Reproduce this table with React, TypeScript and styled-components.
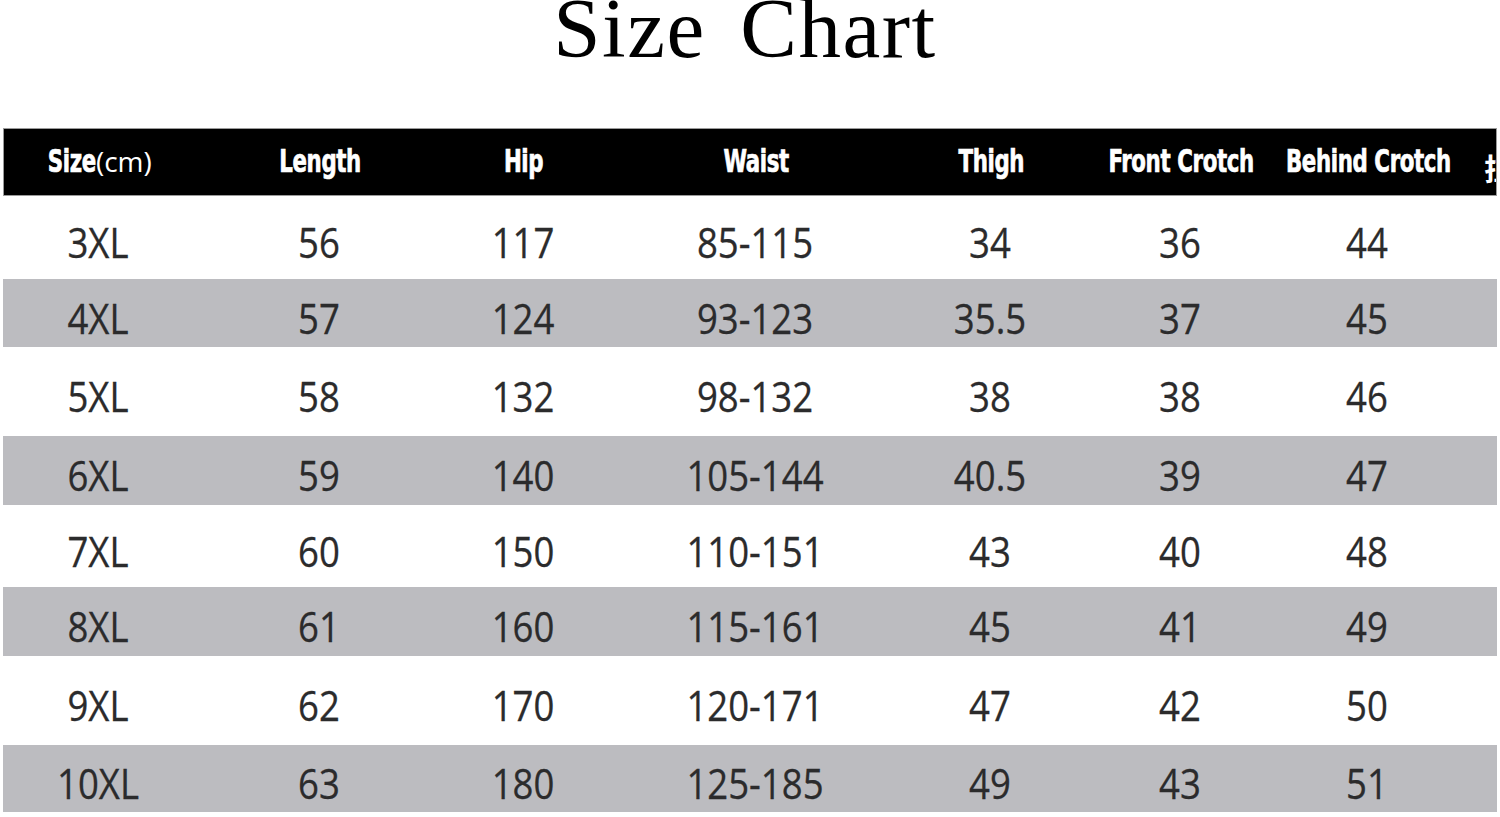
import * as React from 'react';
import styled, { createGlobalStyle } from 'styled-components';

const GlobalStyle = createGlobalStyle`
  html, body {
    margin: 0;
    padding: 0;
    background: #ffffff;
  }
  body {
    width: 1500px;
    height: 817px;
    overflow: hidden;
  }
`;

const COLS = '190px 252px 156px 308px 162px 218px 156px 52px';

const Page = styled.div`
  width: 1500px;
  height: 817px;
  display: flex;
  flex-direction: column;
  background: #ffffff;
`;

const Title = styled.h1`
  margin: 0;
  height: 128px;
  box-sizing: border-box;
  font-family: 'Liberation Serif', 'Times New Roman', serif;
  font-weight: 400;
  font-size: 85px;
  line-height: 57px;
  letter-spacing: 1.5px;
  word-spacing: 12px;
  color: #000;
  text-align: center;
  padding-right: 10px;
`;

const Table = styled.div`
  margin: 0 3px;
  display: flex;
  flex-direction: column;
`;

const HeadRow = styled.div`
  display: grid;
  grid-template-columns: ${COLS};
  height: 68px;
  background: #000;
  border: 1px solid #9a9a9a;
  box-sizing: border-box;
  align-items: center;
  overflow: hidden;
`;

const HeadCell = styled.div`
  display: flex;
  justify-content: center;
  align-items: center;
  white-space: nowrap;
  padding-bottom: 2px;
`;

const SizeCell = styled(HeadCell)`
  justify-content: flex-start;
  padding-left: 27px;
`;

const HeadText = styled.span<{ $origin?: string }>`
  display: inline-block;
  color: #fff;
  font-family: 'DejaVu Sans Condensed', 'DejaVu Sans', sans-serif;
  font-stretch: condensed;
  font-weight: 700;
  font-size: 32px;
  letter-spacing: -0.5px;
  -webkit-text-stroke: 0.7px #fff;
  transform: scaleX(0.74);
  transform-origin: ${(p) => p.$origin || 'center'};
`;

const Unit = styled.span`
  color: #fff;
  font-family: 'Open Sans', 'Liberation Sans', sans-serif;
  font-weight: 400;
  font-size: 28px;
`;

const Cut = styled.div`
  color: #fff;
  font-family: 'Noto Sans CJK SC', sans-serif;
  font-weight: 700;
  font-size: 30px;
  padding-left: 38px;
  padding-top: 10px;
  overflow: hidden;
  white-space: nowrap;
`;

const Row = styled.div<{ $h: number; $shade: boolean }>`
  display: grid;
  grid-template-columns: ${COLS};
  height: ${(p) => p.$h}px;
  box-sizing: border-box;
  padding-top: 8px;
  align-items: center;
  background: ${(p) => (p.$shade ? '#bcbcc0' : '#ffffff')};
`;

const Cell = styled.div`
  display: flex;
  justify-content: center;
  font-family: 'Open Sans', 'Noto Sans', sans-serif;
  font-size: 42px;
  color: #2b2b2c;
  white-space: nowrap;
  transform: scaleX(0.87);
  -webkit-text-stroke: 0.3px #2b2b2c;
`;

const headers = ['Length', 'Hip', 'Waist', 'Thigh', 'Front Crotch', 'Behind Crotch'];

const rows: { h: number; v: string[] }[] = [
  { h: 83, v: ['3XL', '56', '117', '85-115', '34', '36', '44'] },
  { h: 68, v: ['4XL', '57', '124', '93-123', '35.5', '37', '45'] },
  { h: 89, v: ['5XL', '58', '132', '98-132', '38', '38', '46'] },
  { h: 69, v: ['6XL', '59', '140', '105-144', '40.5', '39', '47'] },
  { h: 82, v: ['7XL', '60', '150', '110-151', '43', '40', '48'] },
  { h: 69, v: ['8XL', '61', '160', '115-161', '45', '41', '49'] },
  { h: 89, v: ['9XL', '62', '170', '120-171', '47', '42', '50'] },
  { h: 67, v: ['10XL', '63', '180', '125-185', '49', '43', '51'] },
];

export default function App() {
  return (
    <Page>
      <GlobalStyle />
      <Title>Size Chart</Title>
      <Table>
        <HeadRow>
          <SizeCell>
            <HeadText $origin="right center">Size</HeadText>
            <Unit>(cm)</Unit>
          </SizeCell>
          {headers.map((h) => (
            <HeadCell key={h}>
              <HeadText>{h}</HeadText>
            </HeadCell>
          ))}
          <Cut>拉</Cut>
        </HeadRow>
        {rows.map((r, i) => (
          <Row key={r.v[0]} $h={r.h} $shade={i % 2 === 1}>
            {r.v.map((c, j) => (
              <Cell key={j}>{c}</Cell>
            ))}
          </Row>
        ))}
      </Table>
    </Page>
  );
}
